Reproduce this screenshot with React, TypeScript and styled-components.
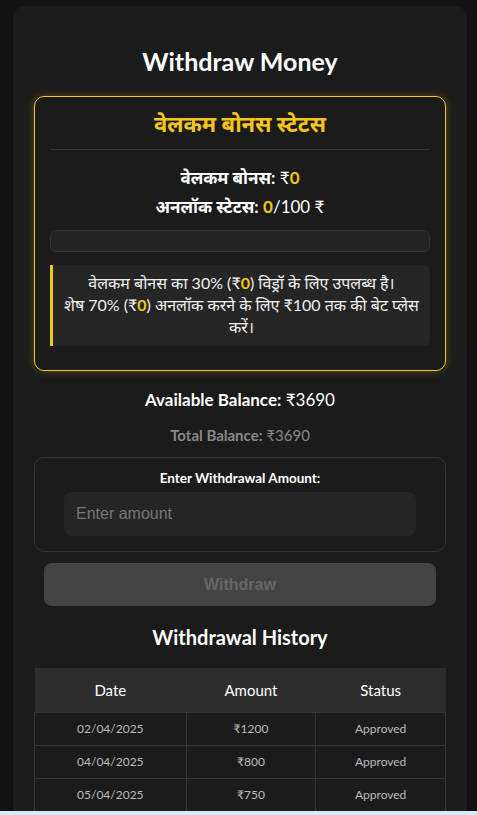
import React from "react";
import styled, { createGlobalStyle } from "styled-components";

const GlobalStyle = createGlobalStyle`
  html, body {
    margin: 0;
    padding: 0;
    background: #121212;
  }
  body {
    font-family: "Lato", "Noto Sans", sans-serif;
    color: #ffffff;
  }
  * { box-sizing: border-box; }
`;

const Page = styled.div`
  margin: 6px 10px 0 13px;
  background: #1b1b1b;
  border-radius: 12px;
  padding: 26px 21px 0;
  min-height: 830px;
`;

const Title = styled.h2`
  margin: 13px 0 19px;
  text-align: center;
  font-size: 25px;
  line-height: 32px;
  font-weight: 700;
  color: #ffffff;
`;

const BonusCard = styled.div`
  border: 1px solid #f5c518;
  border-radius: 10px;
  box-shadow: 0 0 8px rgba(245, 197, 24, 0.3);
  padding: 12px 15px 24px;
`;

const BonusTitle = styled.h3`
  margin: 0;
  padding-bottom: 10px;
  text-align: center;
  font-size: 22px;
  line-height: 30px;
  font-weight: 700;
  color: #f5c518;
  border-bottom: 1px solid #333333;
`;

const BonusLine = styled.p`
  margin: 7px 0 0;
  text-align: center;
  font-size: 17px;
  line-height: 22px;
  color: #ffffff;
  &:first-of-type { margin-top: 17px; }
`;

const Label = styled.strong`
  font-weight: 700;
`;

const Gold = styled.span`
  color: #f5c518;
  font-weight: 700;
`;

const ProgressTrack = styled.div`
  margin-top: 12px;
  height: 22px;
  background: #242424;
  border: 1px solid #333333;
  border-radius: 6px;
  overflow: hidden;
`;

const ProgressFill = styled.div`
  height: 100%;
  background: #f5c518;
`;

const InfoBox = styled.div`
  margin-top: 13px;
  background: #252525;
  border-left: 3px solid #f5c518;
  border-radius: 0 6px 6px 0;
  padding: 7px 8px 8px;
  text-align: center;
  font-size: 16px;
  line-height: 22px;
  color: #f0f0f0;
`;

const Balance = styled.p<{ $muted?: boolean }>`
  margin: ${(p) => (p.$muted ? "15px 0 0" : "19px 0 0")};
  text-align: center;
  font-size: ${(p) => (p.$muted ? "15px" : "17px")};
  line-height: 20px;
  color: ${(p) => (p.$muted ? "#888888" : "#ffffff")};
`;

const AmountBox = styled.div`
  margin-top: 12px;
  border: 1px solid #333333;
  border-radius: 10px;
  padding: 12px 29px 15px;
  display: flex;
  flex-direction: column;
  align-items: stretch;
  gap: 6px;
`;

const AmountLabel = styled.label`
  text-align: center;
  font-size: 13.5px;
  line-height: 16px;
  font-weight: 700;
  color: #ffffff;
`;

const AmountInput = styled.input`
  height: 44px;
  border: none;
  border-radius: 8px;
  background: #252525;
  padding: 0 12px;
  font-family: "Liberation Sans", Arial, sans-serif;
  font-size: 16px;
  color: #ffffff;
  outline: none;
  &::placeholder { color: #777777; }
`;

const WithdrawButton = styled.button`
  display: block;
  width: calc(100% - 20px);
  margin: 11px auto 0;
  height: 43px;
  border: none;
  border-radius: 8px;
  background: #444444;
  color: #666666;
  font-family: "Liberation Sans", Arial, sans-serif;
  font-size: 16px;
  font-weight: 700;
`;

const HistoryTitle = styled.h3`
  margin: 18px 0 0;
  text-align: center;
  font-size: 20px;
  line-height: 26px;
  font-weight: 700;
  color: #ffffff;
`;

const Table = styled.table`
  width: 100%;
  margin-top: 18px;
  border-collapse: collapse;
`;

const HeadCell = styled.th<{ $w: number }>`
  width: ${(p) => p.$w}px;
  height: 44px;
  background: #2d2d2d;
  font-size: 15px;
  font-weight: 400;
  color: #ffffff;
  text-align: center;
`;

const Cell = styled.td`
  height: 33px;
  border: 1px solid #333333;
  font-size: 12px;
  color: #bbbbbb;
  text-align: center;
`;

const BottomStrip = styled.div`
  position: fixed;
  left: 0;
  right: 0;
  bottom: 0;
  height: 4px;
  background: #d4eaf6;
`;

const history = [
  { date: "02/04/2025", amount: "₹1200", status: "Approved" },
  { date: "04/04/2025", amount: "₹800", status: "Approved" },
  { date: "05/04/2025", amount: "₹750", status: "Approved" },
  { date: "06/04/2025", amount: "₹500", status: "Approved" },
];

export default function App() {
  const unlocked = 0;
  const target = 100;
  return (
    <>
      <GlobalStyle />
      <Page>
        <Title>Withdraw Money</Title>
        <BonusCard>
          <BonusTitle>वेलकम बोनस स्टेटस</BonusTitle>
          <BonusLine>
            <Label>वेलकम बोनस:</Label> ₹<Gold>0</Gold>
          </BonusLine>
          <BonusLine>
            <Label>अनलॉक स्टेटस:</Label> <Gold>0</Gold>/100 ₹
          </BonusLine>
          <ProgressTrack>
            <ProgressFill style={{ width: `${(unlocked / target) * 100}%` }} />
          </ProgressTrack>
          <InfoBox>
            वेलकम बोनस का 30% (₹<Gold>0</Gold>) विड्रॉ के लिए उपलब्ध है।
            <br />
            शेष 70% (₹<Gold>0</Gold>) अनलॉक करने के लिए ₹100 तक की बेट प्लेस करें।
          </InfoBox>
        </BonusCard>

        <Balance>
          <Label>Available Balance:</Label> ₹3690
        </Balance>
        <Balance $muted>
          <Label>Total Balance:</Label> ₹3690
        </Balance>

        <AmountBox>
          <AmountLabel htmlFor="amount">Enter Withdrawal Amount:</AmountLabel>
          <AmountInput id="amount" type="number" placeholder="Enter amount" />
        </AmountBox>

        <WithdrawButton disabled>Withdraw</WithdrawButton>

        <HistoryTitle>Withdrawal History</HistoryTitle>
        <Table>
          <thead>
            <tr>
              <HeadCell $w={152}>Date</HeadCell>
              <HeadCell $w={130}>Amount</HeadCell>
              <HeadCell $w={130}>Status</HeadCell>
            </tr>
          </thead>
          <tbody>
            {history.map((h) => (
              <tr key={h.date}>
                <Cell>{h.date}</Cell>
                <Cell>{h.amount}</Cell>
                <Cell>{h.status}</Cell>
              </tr>
            ))}
          </tbody>
        </Table>
      </Page>
      <BottomStrip />
    </>
  );
}
